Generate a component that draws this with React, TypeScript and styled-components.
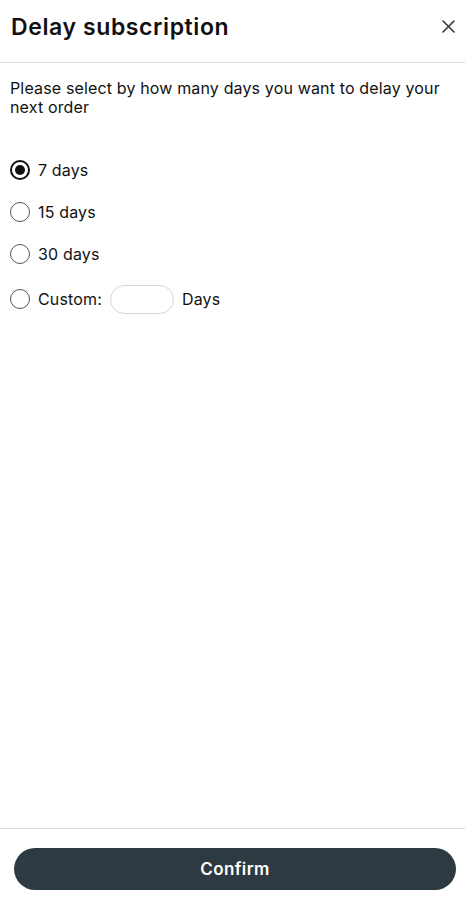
import React, { useState } from "react";
import styled, { createGlobalStyle } from "styled-components";

const Global = createGlobalStyle`
  html, body { margin: 0; padding: 0; background: #fff; }
  body { font-family: "Inter", "Noto Sans", sans-serif; color: #111; }
  * { box-sizing: border-box; }
`;

const Page = styled.div`
  width: 465px;
  height: 902px;
  display: flex;
  flex-direction: column;
  background: #fff;
`;

const Header = styled.header`
  height: 63px;
  display: flex;
  align-items: center;
  justify-content: space-between;
  padding: 0 5px 9px 11px;
  border-bottom: 1px solid #d9d9d9;
`;

const Title = styled.h1`
  margin: 0;
  font-size: 23px;
  font-weight: 600;
  letter-spacing: 0.6px;
  color: #111;
`;

const CloseButton = styled.button`
  width: 24px;
  height: 24px;
  border: 0;
  background: none;
  padding: 0;
  display: flex;
  align-items: center;
  justify-content: center;
  cursor: pointer;
`;

const Body = styled.main`
  flex: 1;
  padding: 16px 10px 0 10px;
`;

const Description = styled.p`
  margin: 0;
  font-size: 16px;
  line-height: 19px;
  letter-spacing: 0.15px;
  color: #111;
`;

const Options = styled.div`
  margin-top: 42px;
  display: flex;
  flex-direction: column;
  gap: 20px;
`;

const Option = styled.label`
  display: flex;
  align-items: center;
  gap: 8px;
  height: 22px;
  font-size: 16px;
  letter-spacing: 0.15px;
  cursor: pointer;
`;

const Radio = styled.span<{ $checked: boolean }>`
  width: 20px;
  height: 20px;
  border-radius: 50%;
  border: ${(p) => (p.$checked ? "2px solid #111" : "1px solid #555")};
  display: flex;
  align-items: center;
  justify-content: center;
  flex-shrink: 0;
  &::after {
    content: "";
    width: 10px;
    height: 10px;
    border-radius: 50%;
    background: #111;
    display: ${(p) => (p.$checked ? "block" : "none")};
  }
`;

const CustomRow = styled(Option)`
  height: 30px;
  margin-top: -1px;
`;

const DaysInput = styled.input`
  width: 64px;
  height: 29px;
  border: 1px solid #d6d6d6;
  border-radius: 15px;
  outline: none;
  padding: 0 10px;
  font-size: 15px;
  font-family: inherit;
`;

const Footer = styled.footer`
  border-top: 1px solid #d9d9d9;
  padding: 19px 9px 12px 14px;
`;

const Confirm = styled.button`
  width: 100%;
  height: 42px;
  border: 0;
  border-radius: 21px;
  background: #2e3a41;
  color: #fff;
  font-family: inherit;
  font-size: 17px;
  font-weight: 600;
  letter-spacing: 0.4px;
  cursor: pointer;
`;

const options = [7, 15, 30];

export default function App() {
  const [sel, setSel] = useState<number | "custom">(7);
  return (
    <Page>
      <Global />
      <Header>
        <Title>Delay subscription</Title>
        <CloseButton aria-label="Close">
          <svg width="13" height="13" viewBox="0 0 13 13" fill="none" stroke="#2e3a41" strokeWidth="1.6" strokeLinecap="round">
            <path d="M1 1L12 12M12 1L1 12" />
          </svg>
        </CloseButton>
      </Header>
      <Body>
        <Description>Please select by how many days you want to delay your next order</Description>
        <Options>
          {options.map((d) => (
            <Option key={d} onClick={() => setSel(d)}>
              <Radio $checked={sel === d} />
              {d} days
            </Option>
          ))}
          <CustomRow onClick={() => setSel("custom")}>
            <Radio $checked={sel === "custom"} />
            Custom:
            <DaysInput type="text" />
            Days
          </CustomRow>
        </Options>
      </Body>
      <Footer>
        <Confirm>Confirm</Confirm>
      </Footer>
    </Page>
  );
}
